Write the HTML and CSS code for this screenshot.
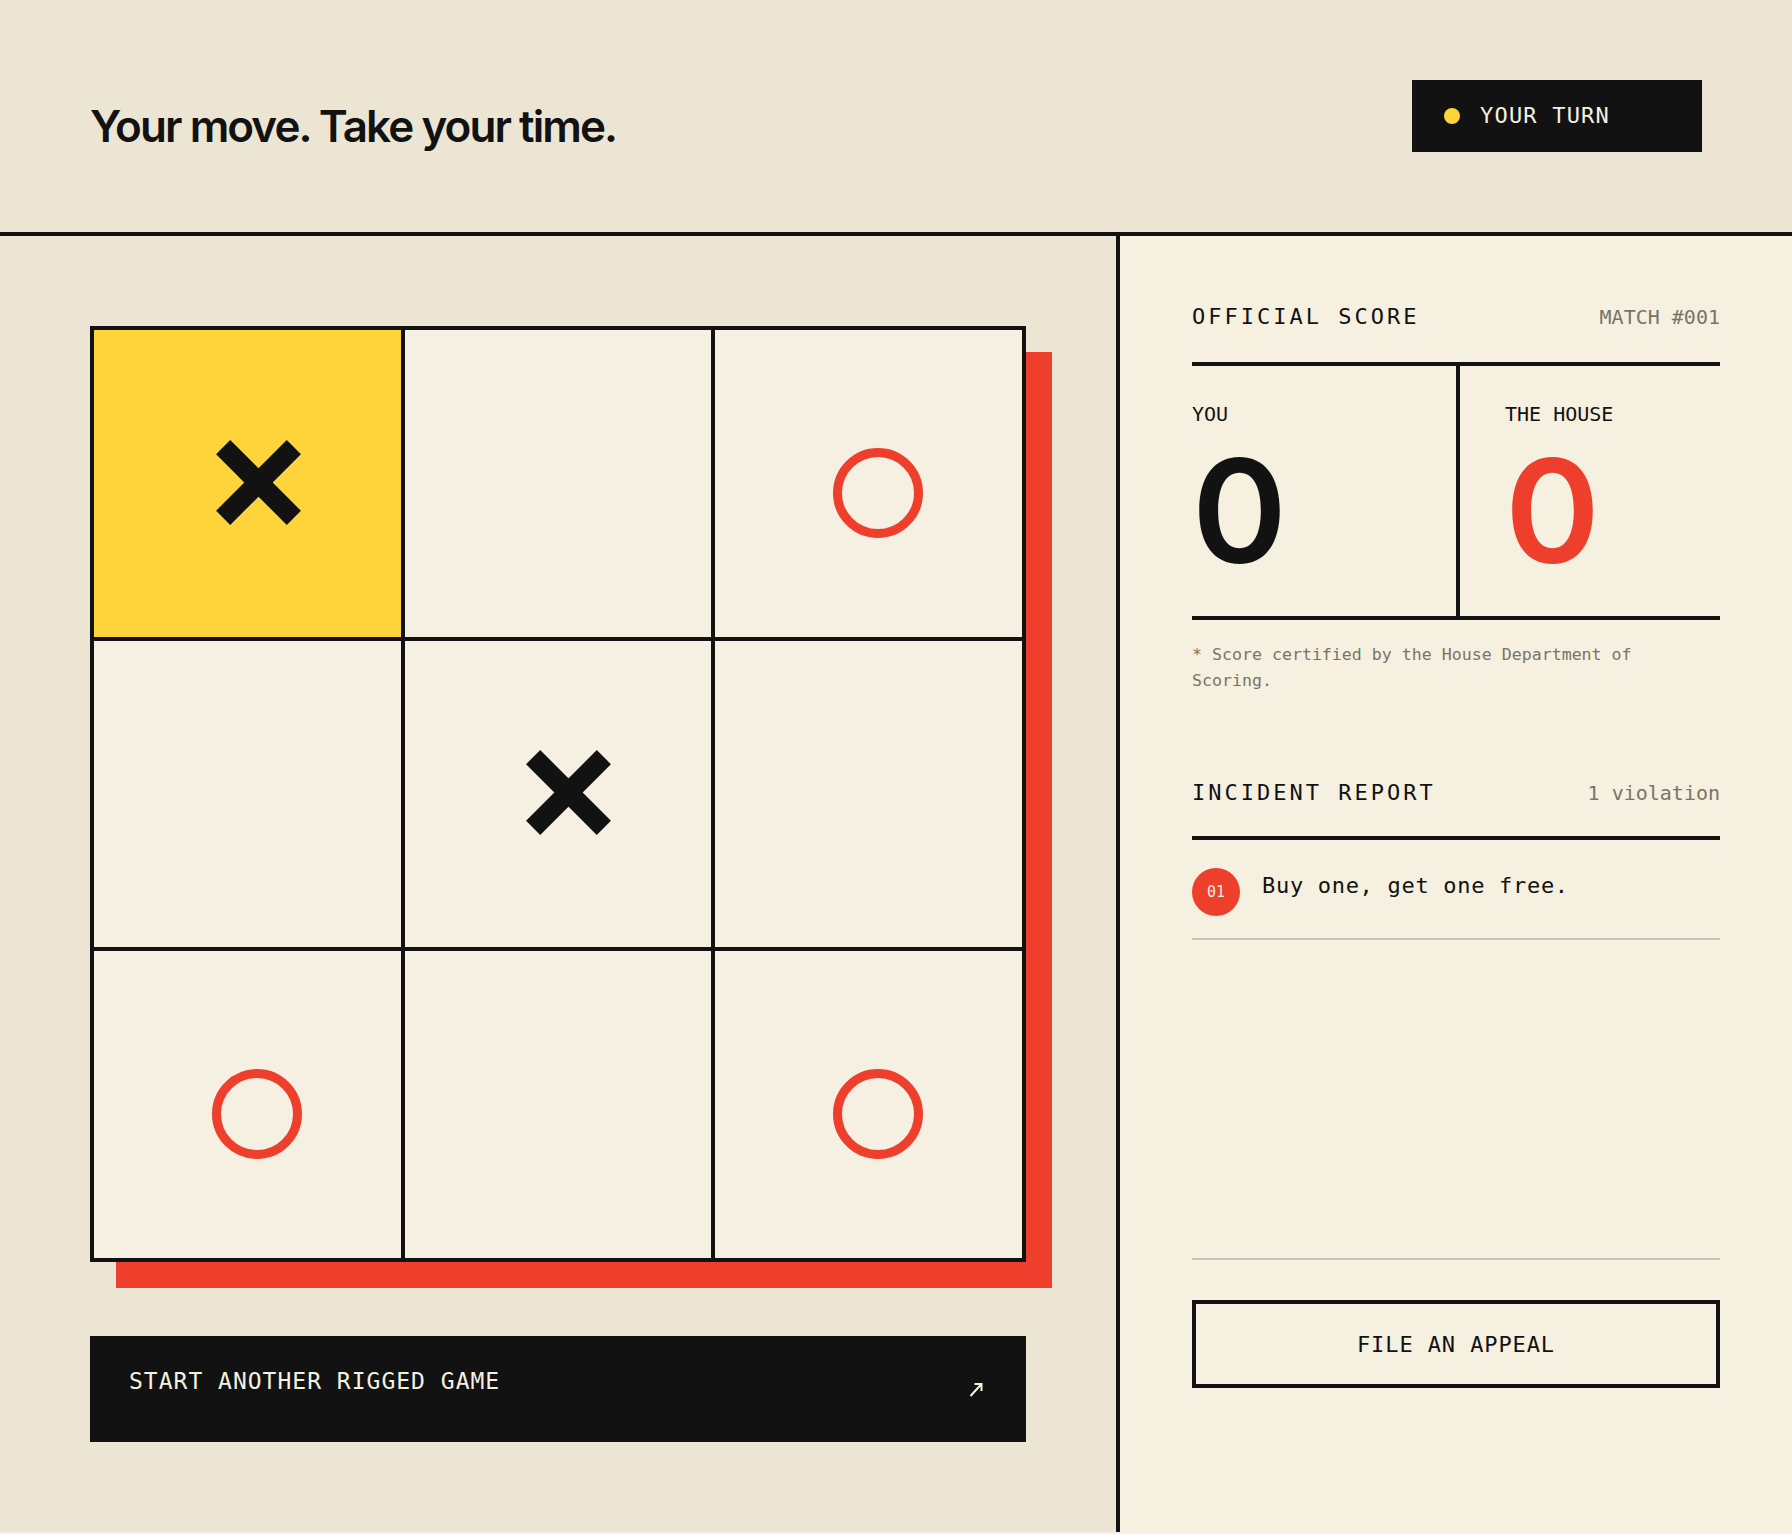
FILE: index.html
```html
<!DOCTYPE html>
<html lang="en">
<head>
<meta charset="utf-8">
<title>Your move. Take your time.</title>
<link rel="stylesheet" href="styles.css">
</head>
<body>
<header class="topbar">
  <h1 class="headline">Your move. Take your time.</h1>
  <div class="turn-badge"><span class="turn-dot"></span><span class="turn-text">YOUR TURN</span></div>
</header>
<main class="layout">
  <section class="play">
    <div class="board">
      <div class="cell cell-active"><svg class="mark-x" viewBox="0 0 85 85" width="85" height="85"><g transform="translate(42.5 42.5)"><rect x="-50" y="-10" width="100" height="20" transform="rotate(45)"/><rect x="-50" y="-10" width="100" height="20" transform="rotate(-45)"/></g></svg></div>
      <div class="cell"></div>
      <div class="cell"><svg class="mark-o" viewBox="0 0 90 90" width="90" height="90"><circle cx="45" cy="45" r="40.5"/></svg></div>
      <div class="cell"></div>
      <div class="cell"><svg class="mark-x" viewBox="0 0 85 85" width="85" height="85"><g transform="translate(42.5 42.5)"><rect x="-50" y="-10" width="100" height="20" transform="rotate(45)"/><rect x="-50" y="-10" width="100" height="20" transform="rotate(-45)"/></g></svg></div>
      <div class="cell"></div>
      <div class="cell"><svg class="mark-o" viewBox="0 0 90 90" width="90" height="90"><circle cx="45" cy="45" r="40.5"/></svg></div>
      <div class="cell"></div>
      <div class="cell"><svg class="mark-o" viewBox="0 0 90 90" width="90" height="90"><circle cx="45" cy="45" r="40.5"/></svg></div>
    </div>
    <button class="restart">
      <span class="restart-label">START ANOTHER RIGGED GAME</span>
      <svg class="restart-arrow" viewBox="0 0 14 15" width="14" height="15"><path d="M1.5 14 L12.5 2 M5.5 2 H12.5 V9"/></svg>
    </button>
  </section>
  <aside class="panel">
    <section class="score">
      <div class="section-head score-head">
        <h2 class="section-title">OFFICIAL SCORE</h2>
        <span class="section-meta">MATCH #001</span>
      </div>
      <div class="scoreboard">
        <div class="score-col">
          <div class="score-label">YOU</div>
          <div class="score-num">0</div>
        </div>
        <div class="score-col score-col-house">
          <div class="score-label">THE HOUSE</div>
          <div class="score-num score-num-house">0</div>
        </div>
      </div>
      <p class="note">* Score certified by the House Department of Scoring.</p>
    </section>
    <section class="incidents">
      <div class="section-head incident-head">
        <h2 class="section-title">INCIDENT REPORT</h2>
        <span class="section-meta">1 violation</span>
      </div>
      <ol class="incident-list">
        <li class="incident"><span class="incident-num">01</span><span class="incident-text">Buy one, get one free.</span></li>
      </ol>
    </section>
    <button class="appeal">FILE AN APPEAL</button>
  </aside>
</main>
</body>
</html>
```
FILE: styles.css
```css
html {
  background: #F5F0E0;
}
body {
  margin: 0;
  background: #F5F0E0;
  color: #121212;
  font-family: "DejaVu Sans Mono", "Liberation Mono", monospace;
}
.topbar {
  height: 232px;
  box-sizing: content-box;
  border-bottom: 4px solid #121212;
  background: #ECE5D3;
  display: flex;
  align-items: center;
  justify-content: space-between;
  padding: 0 90px;
}
.headline {
  margin: 0;
  padding-top: 20px;
  font-family: Inter, "Liberation Sans", sans-serif;
  font-weight: 600;
  font-size: 44px;
  letter-spacing: -0.044em;
  line-height: 1.2;
}
.turn-badge {
  width: 290px;
  height: 72px;
  box-sizing: border-box;
  background: #121212;
  display: flex;
  align-items: center;
  gap: 20px;
  padding-left: 32px;
}
.turn-dot {
  width: 16px;
  height: 16px;
  border-radius: 50%;
  background: #FFD43A;
}
.turn-text {
  color: #F5F0E0;
  font-size: 22px;
  letter-spacing: 1.2px;
  line-height: 26px;
}
.layout {
  display: flex;
  height: 1296px;
}
.play {
  width: 1120px;
  box-sizing: border-box;
  background: #ECE5D3;
  border-right: 4px solid #121212;
  padding: 90px;
  display: flex;
  flex-direction: column;
  gap: 74px;
  flex-shrink: 0;
}
.board {
  width: 936px;
  height: 936px;
  flex-shrink: 0;
  box-sizing: border-box;
  border: 4px solid #121212;
  background: #121212;
  display: grid;
  grid-template-columns: repeat(3, 1fr);
  grid-template-rows: repeat(3, 1fr);
  gap: 4px;
  box-shadow: 26px 26px 0 #EE3F2C;
}
.cell {
  background: #F5F0E1;
  display: flex;
  align-items: center;
  justify-content: center;
}
.cell-active {
  background: #FFD43A;
}
.mark-x {
  fill: #121212;
  margin: 0 0 2px 22px;
}
.mark-o {
  fill: none;
  stroke: #EE3F2C;
  stroke-width: 9;
  margin: 19px 0 0 19px;
}
.restart {
  width: 936px;
  height: 106px;
  flex-shrink: 0;
  border: 0;
  background: #121212;
  color: #F5F0E0;
  display: flex;
  align-items: center;
  justify-content: space-between;
  padding: 0 43px 0 39px;
  font-family: inherit;
  cursor: pointer;
}
.restart-label {
  font-size: 23px;
  letter-spacing: 1px;
  line-height: 26px;
  margin-bottom: 16px;
}
.restart-arrow {
  fill: none;
  stroke: #F5F0E0;
  stroke-width: 2;
}
.panel {
  flex: 1;
  background: #F5F0E0;
  padding: 68px 72px 144px;
  display: flex;
  flex-direction: column;
}
.section-head {
  display: flex;
  justify-content: space-between;
  align-items: baseline;
}
.score-head {
  padding-bottom: 32px;
}
.section-title {
  margin: 0;
  font-weight: 400;
  font-size: 22px;
  line-height: 26px;
  letter-spacing: 3px;
}
.section-meta {
  font-size: 20px;
  color: #7A7466;
}
.scoreboard {
  display: grid;
  grid-template-columns: 1fr 1fr;
  border-top: 4px solid #121212;
  border-bottom: 4px solid #121212;
}
.score-col {
  padding: 36px 0 33px;
}
.score-col-house {
  border-left: 4px solid #121212;
  padding-left: 45px;
}
.score-label {
  font-size: 20px;
  line-height: 24px;
}
.score-num {
  margin-top: 13px;
  font-family: Inter, "Liberation Sans", sans-serif;
  font-weight: 600;
  font-size: 144px;
  line-height: 144px;
  letter-spacing: -0.02em;
}
.score-num-house {
  color: #EE3F2C;
}
.note {
  margin: 22px 0 0;
  font-size: 16.6px;
  line-height: 26px;
  color: #7A7466;
}
.incidents {
  flex: 1;
  margin-top: 86px;
  border-bottom: 2px solid #C8C3B4;
  display: flex;
  flex-direction: column;
}
.incident-head {
  padding-bottom: 30px;
  border-bottom: 4px solid #121212;
}
.incident-list {
  list-style: none;
  margin: 0;
  padding: 0;
}
.incident {
  display: flex;
  align-items: flex-start;
  gap: 22px;
  padding: 28px 0 22px;
  border-bottom: 2px solid #C8C3B4;
}
.incident-num {
  width: 48px;
  height: 48px;
  border-radius: 50%;
  background: #EE3F2C;
  color: #F5F0E0;
  font-size: 15px;
  display: flex;
  align-items: center;
  justify-content: center;
  flex-shrink: 0;
}
.incident-text {
  margin-top: 2px;
  font-size: 22px;
  line-height: 32px;
  letter-spacing: 0.7px;
}
.appeal {
  margin-top: 40px;
  height: 88px;
  border: 4px solid #121212;
  background: transparent;
  color: #121212;
  font-family: inherit;
  font-size: 22px;
  letter-spacing: 0.9px;
  cursor: pointer;
}
```
